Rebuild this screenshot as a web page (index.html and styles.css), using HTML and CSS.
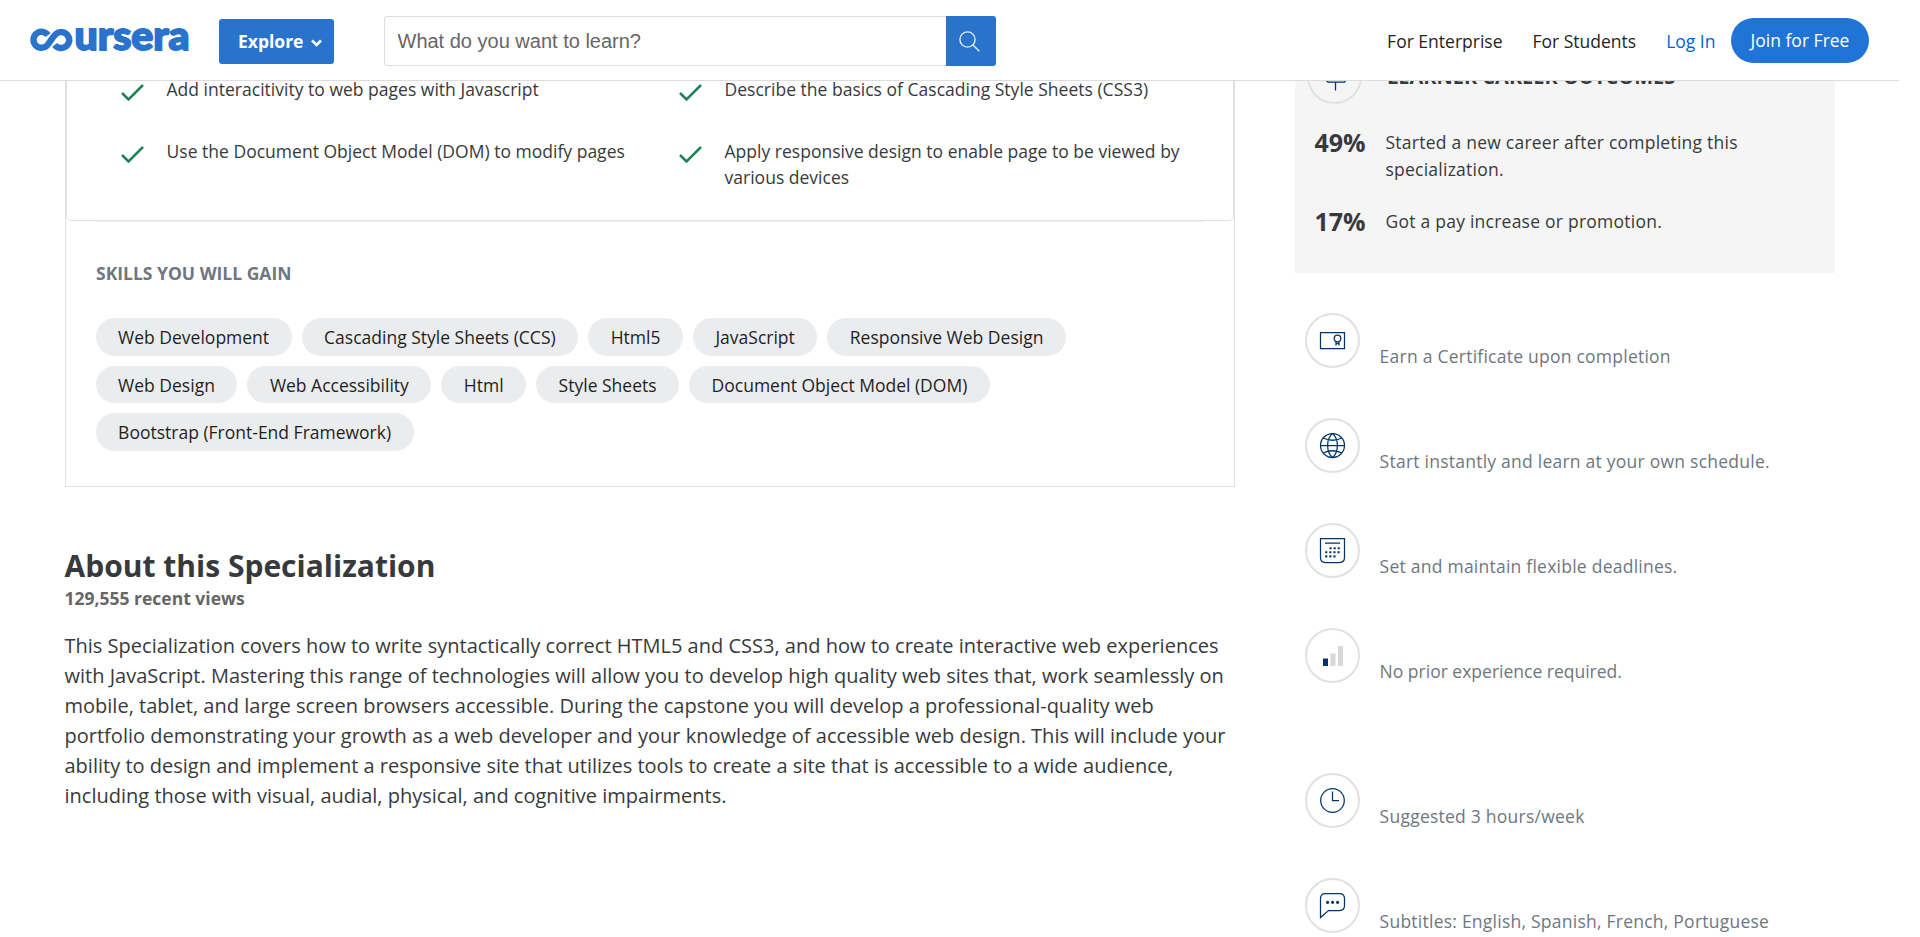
FILE: index.html
```html
<!DOCTYPE html>
<html lang="en">
<head>
<meta charset="utf-8">
<title>Coursera</title>
<link rel="stylesheet" href="styles.css">
</head>
<body>
<header class="header">
  <a class="logo" aria-label="coursera">
    <svg width="164" height="40" viewBox="30 19 164 40">
      <path class="logo-loop" d="M48 35.200 A8 8 0 1 0 47 45.600 C50.500 42 52 37.300 55.800 34.200 A8 8 0 1 1 54.800 44.800"/>
      <text class="logo-text" x="74.500" y="50" textLength="115" lengthAdjust="spacingAndGlyphs">ursera</text>
    </svg>
  </a>
  <button class="explore">Explore
    <svg width="11" height="8" viewBox="0 0 11 8"><path d="M1 1.500 5.500 6 10 1.500"/></svg>
  </button>
  <div class="search">
    <input class="search-input" type="text" placeholder="What do you want to learn?">
    <button class="search-button" aria-label="Search">
      <svg width="21" height="21" viewBox="0 0 21 21"><circle cx="8.500" cy="8.500" r="7.600"/><path d="M14 14 20.300 20.300"/></svg>
    </button>
  </div>
  <nav class="nav">
    <a>For Enterprise</a>
    <a>For Students</a>
    <a class="login">Log In</a>
    <a class="join">Join for Free</a>
  </nav>
</header>
<div class="page">
  <main class="main">
    <section class="card">
      <ul class="learn">
        <li><svg class="check" viewBox="0 0 23 17"><path d="M1 9 7.500 15.500 22 1"/></svg><span>Add interacitivity to web pages with Javascript</span></li>
        <li><svg class="check" viewBox="0 0 23 17"><path d="M1 9 7.500 15.500 22 1"/></svg><span>Describe the basics of Cascading Style Sheets (CSS3)</span></li>
        <li><svg class="check" viewBox="0 0 23 17"><path d="M1 9 7.500 15.500 22 1"/></svg><span>Use the Document Object Model (DOM) to modify pages</span></li>
        <li><svg class="check" viewBox="0 0 23 17"><path d="M1 9 7.500 15.500 22 1"/></svg><span>Apply responsive design to enable page to be viewed by various devices</span></li>
      </ul>
      <div class="skills">
        <h2 class="skills-title">SKILLS YOU WILL GAIN</h2>
        <div class="chips">
          <span class="chip">Web Development</span>
          <span class="chip">Cascading Style Sheets (CCS)</span>
          <span class="chip">Html5</span>
          <span class="chip">JavaScript</span>
          <span class="chip">Responsive Web Design</span>
          <span class="chip">Web Design</span>
          <span class="chip">Web Accessibility</span>
          <span class="chip">Html</span>
          <span class="chip">Style Sheets</span>
          <span class="chip">Document Object Model (DOM)</span>
          <span class="chip">Bootstrap (Front-End Framework)</span>
        </div>
      </div>
    </section>
    <section class="about">
      <h2 class="about-title">About this Specialization</h2>
      <p class="views">129,555 recent views</p>
      <p class="description">This Specialization covers how to write syntactically correct HTML5 and CSS3, and how to create interactive web experiences with JavaScript. Mastering this range of technologies will allow you to develop high quality web sites that, work seamlessly on mobile, tablet, and large screen browsers accessible. During the capstone you will develop a professional-quality web portfolio demonstrating your growth as a web developer and your knowledge of accessible web design. This will include your ability to design and implement a responsive site that utilizes tools to create a site that is accessible to a wide audience, including those with visual, audial, physical, and cognitive impairments.</p>
    </section>
  </main>
  <aside class="sidebar">
    <section class="outcomes">
      <div class="outcomes-head">
        <span class="round"><svg class="icon" viewBox="0 0 25 25"><path d="M13.500-1V2M3 2H22V8H3ZM13.500 8V11M5 11H22.500L25 14.500 22.500 18H6L4.500 16.500M13.500 18V26.500"/></svg></span>
        <h2 class="outcomes-title">LEARNER CAREER OUTCOMES</h2>
      </div>
      <div class="outcome"><strong>49%</strong><p>Started a new career after completing this specialization.</p></div>
      <div class="outcome"><strong>17%</strong><p>Got a pay increase or promotion.</p></div>
    </section>
    <ul class="facts">
      <li><span class="round"><svg class="icon" viewBox="0 0 25 25"><path d="M.5 4.500H24.500V20.500H.5Z"/><circle cx="17.500" cy="10.500" r="3.300"/><path d="M16 14V17.500M19 14V17.500M16 15.500H19"/></svg></span><span>Earn a Certificate upon completion</span></li>
      <li><span class="round"><svg class="icon" viewBox="0 0 25 25"><circle cx="12.500" cy="12.500" r="12"/><path d="M.5 12.500H24.500M3.200 5Q12.500 9.500 21.800 5M3.200 20Q12.500 15.500 21.800 20M12.500.5C6 6 6 19 12.500 24.500M12.500.5C19 6 19 19 12.500 24.500"/></svg></span><span>Start instantly and learn at your own schedule.</span></li>
      <li><span class="round"><svg class="icon" viewBox="0 0 25 25"><path d="M.5.500H24.500V19.500Q24.500 24.500 19.500 24.500H5.500Q.5 24.500.500 19.500ZM5 5H20"/><path class="dots" d="M9.500 10.200H20M5.200 14.300H20M5.200 18.400H16"/></svg></span><span>Set and maintain flexible deadlines.</span></li>
      <li class="level"><span class="round"><svg class="icon bars" viewBox="0 0 25 25"><path class="on" d="M3 15.500H8V23H3Z"/><path d="M10.500 10.500H15.500V23H10.500ZM18 3H23V23H18Z"/></svg></span><span>No prior experience required.</span></li>
      <li><span class="round"><svg class="icon" viewBox="0 0 25 25"><circle cx="12.500" cy="12.500" r="11.800"/><path d="M12.500 3.500V12.500H19"/></svg></span><span>Suggested 3 hours/week</span></li>
      <li><span class="round"><svg class="icon" viewBox="0 0 25 25"><path d="M.5 24.500V5.500Q.5.500 5.500.500H19.500Q24.500.500 24.500 5.500V12.500Q24.500 17.500 19.500 17.500H8.500Z"/><path class="fill" d="M6 9.300a1.600 1.600 0 1 1 3.200 0a1.600 1.600 0 1 1-3.200 0M11 9.300a1.600 1.600 0 1 1 3.200 0a1.600 1.600 0 1 1-3.200 0M16 9.300a1.600 1.600 0 1 1 3.200 0a1.600 1.600 0 1 1-3.200 0"/></svg></span><span>Subtitles: English, Spanish, French, Portuguese</span></li>
    </ul>
  </aside>
</div>
</body>
</html>
```
FILE: styles.css
```css
* { box-sizing: border-box; }
html { overflow: hidden; }
body { margin: 0; height: 937px; overflow: hidden; background: #fff; color: #373a3c; font: 17.5px/26.25px "Open Sans", sans-serif; }
h2, p, ul { margin: 0; padding: 0; }
ul { list-style: none; }
svg { display: block; fill: none; }

.header { position: fixed; z-index: 2; top: 0; left: 0; display: flex; align-items: flex-start; width: 1899px; height: 81px; padding-left: 30px; padding-right: 30px; background: #fff; border-bottom: 1px solid #ddd; }
.logo { width: 164px; margin: 19px 25px 0 0; }
.logo svg { overflow: visible; }
.logo-loop { stroke: #2a73cc; stroke-width: 6.4; }
.logo-text { fill: #2a73cc; stroke: #2a73cc; stroke-width: 1.800; font: 900 39px Lato, sans-serif; }
.explore { display: flex; align-items: center; gap: 8px; width: 115px; height: 45px; margin-top: 19px; padding: 0 0 1px 19px; border: 0; border-radius: 3px; background: #2a73cc; color: #fff; font: 700 17.5px "Open Sans", sans-serif; }
.explore svg { stroke: #fff; stroke-width: 2.600; margin-top: 3px; }
.search { display: flex; width: 612px; height: 50px; margin: 16px 0 0 50px; }
.search-input { width: 562px; height: 50px; padding: 0 0 0 12.500px; border: 1px solid #ddd; border-right: 0; border-radius: 3px 0 0 3px; color: #666; font: 20px "Liberation Sans", sans-serif; }
.search-input::placeholder { color: #666; opacity: 1; }
.search-button { display: grid; place-items: center; width: 50px; padding: 0 4px 0 0; border: 0; border-radius: 0 3px 3px 0; background: #2a73cc; }
.search-button svg { stroke: #e5edf8; stroke-width: 1.400; }
.nav { display: flex; margin: 18px 0 0 auto; color: #1f1f1f; line-height: 47px; }
.nav a { margin-right: 30px; white-space: nowrap; }
.nav .login { margin-right: 15.500px; color: #0062e4; }
.nav .join { width: 138px; height: 45px; margin: 0; border-radius: 23px; background: #2073d7; color: #fff; text-align: center; line-height: 45px; }

.page { display: grid; grid-template-columns: 1170px 540px; column-gap: 60px; padding-left: 65px; }
.card { height: 487px; border: 1px solid #e1e1e1; border-top: 0; }
.learn { display: grid; grid-template-columns: 558px 1fr; row-gap: 35.750px; height: 221px; padding: 76px 40px 0 54px; align-content: start; border: 1px solid #e1e1e1; border-top: 0; border-radius: 0 0 5px 5px; }
.learn li { display: flex; gap: 22.5px; letter-spacing: .015px; }
.check { flex: none; width: 23px; height: 17px; margin-top: 8px; stroke: #1f8354; stroke-width: 2.500; }
.skills { margin: 0 30px; border-top: 1px solid #eee; }
.skills-title { margin-top: 38px; color: #6e7780; font-size: 17.5px; line-height: 26.25px; }
.chips { display: flex; flex-wrap: wrap; gap: 10px; margin-top: 32px; margin-left: -.4px; }
.chip { height: 37.5px; padding: 0 22.5px; border-radius: 19px; background: #ebecee; color: #1f1f1f; line-height: 39px; white-space: nowrap; }
.about { margin-top: 60px; }
.about-title { margin-left: -.5px; font-size: 30px; line-height: 37.5px; }
.views { margin-left: -.5px; color: #666; font-weight: 700; }
.description { margin: 20px 0 0 -.5px; font-size: 20px; line-height: 30px; letter-spacing: .008px; }

.outcomes { height: 273px; padding: 49px 20px 0 12px; background: #f5f5f5; }
.round { display: grid; flex: none; place-items: center; width: 55px; height: 55px; border: 2px solid #e1e1e1; border-radius: 50%; }
.icon { width: 25px; height: 25px; overflow: visible; stroke: #00356b; stroke-width: 1.250; }
.icon .dots { stroke-width: 2.100; stroke-dasharray: 2.100 2; }
.icon .fill { fill: #00356b; stroke: none; }
.bars { fill: #d8d8d8; stroke: none; }
.bars .on { fill: #00356b; }
.outcomes-head { display: flex; gap: 25px; }
.outcomes-title { margin-top: 13px; font-size: 20px; line-height: 30px; }
.outcome { display: flex; margin: 25px 0 25px 7.500px; }
.outcome strong { flex: none; width: 71px; margin-top: -2px; font-size: 25px; line-height: 30px; }
.outcome p { line-height: 27px; letter-spacing: .24px; }
.facts { padding: 40px 0 0 10px; color: #6e7780; }
.facts li { display: flex; gap: 20px; height: 105px; }
.facts li > span:last-child { margin: 30px 0 0 -.4px; white-space: nowrap; letter-spacing: .24px; }
.facts .level { height: 145px; }
.facts .level > span:last-child { letter-spacing: 0; }
```
